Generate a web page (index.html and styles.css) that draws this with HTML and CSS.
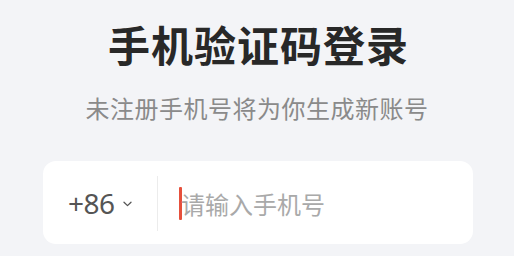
FILE: index.html
```html
<!DOCTYPE html>
<html lang="zh-CN">
<head>
<meta charset="utf-8">
<title>手机验证码登录</title>
<link rel="stylesheet" href="styles.css">
</head>
<body>
<main class="page">
  <h1 class="title">手机验证码登录</h1>
  <p class="subtitle">未注册手机号将为你生成新账号</p>
  <div class="phone-card">
    <div class="area-code">
      <span class="code">+86</span>
      <svg class="chevron" width="9" height="6" viewBox="0 0 9 6" aria-hidden="true">
        <path d="M1 1.2 L4.5 4.6 L8 1.2" fill="none" stroke="#555" stroke-width="1.3" stroke-linecap="round" stroke-linejoin="round"/>
      </svg>
    </div>
    <div class="divider"></div>
    <div class="input-wrap">
      <span class="caret"></span>
      <span class="placeholder">请输入手机号</span>
    </div>
  </div>
</main>
</body>
</html>
```

FILE: styles.css
```css
html, body {
  margin: 0;
  padding: 0;
}
body {
  background: #f3f4f7;
  font-family: "Noto Sans CJK SC", "Noto Sans", sans-serif;
  width: 514px;
  height: 256px;
  overflow: hidden;
}
.page {
  display: flex;
  flex-direction: column;
  align-items: flex-start;
  padding-top: 23px;
}
.title {
  align-self: center;
  margin: 0;
  font-size: 42px;
  line-height: 42px;
  font-weight: 700;
  color: #282828;
  letter-spacing: 1px;
  margin-left: 3px;
}
.subtitle {
  align-self: center;
  margin: 31px 0 0 0;
  font-size: 24px;
  line-height: 24px;
  color: #8a8a8a;
  letter-spacing: 0.5px;
}
.phone-card {
  margin: 41px 0 0 43px;
  width: 430px;
  height: 83px;
  background: #ffffff;
  border-radius: 13px;
  display: flex;
  align-items: center;
  box-sizing: border-box;
  padding-left: 25px;
}
.area-code {
  display: flex;
  align-items: center;
  width: 89px;
}
.code {
  font-family: "Noto Sans", "Noto Sans CJK SC", sans-serif;
  font-size: 28px;
  line-height: 28px;
  color: #555555;
  letter-spacing: -0.5px;
}
.chevron {
  margin-left: 8px;
  margin-top: 3px;
}
.divider {
  width: 1px;
  height: 55px;
  background: #ececec;
  margin-top: 2px;
}
.input-wrap {
  display: flex;
  align-items: center;
  padding-left: 21px;
}
.caret {
  width: 3px;
  height: 33px;
  background: #e6503c;
  border-radius: 1px;
  margin-right: -1px;
  margin-top: 2px;
}
.placeholder {
  font-size: 24px;
  line-height: 24px;
  color: #a9a9a9;
  margin-top: 2px;
}
```
